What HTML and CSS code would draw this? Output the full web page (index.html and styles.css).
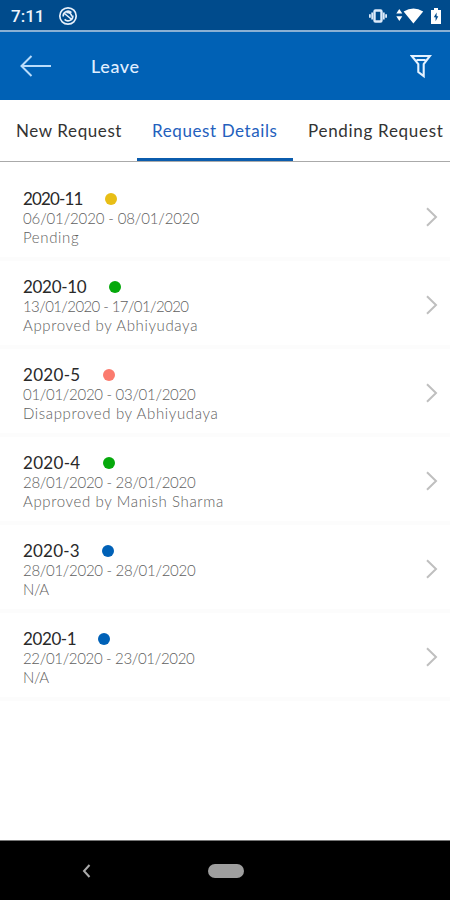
FILE: index.html
```html
<!DOCTYPE html>
<html lang="en">
<head>
<meta charset="utf-8">
<title>Leave</title>
<link rel="stylesheet" href="styles.css">
</head>
<body>
<div class="screen">
  <div class="status-bar">
    <span class="clock">7:11</span>
    <svg class="notice" width="20" height="20" viewBox="0 0 20 20" fill="none" stroke="#e6f0fb"><circle cx="10" cy="10" r="8.2" stroke-width="1.7"/><path d="M5.2 10.5a4.8 4.8 0 0 1 8.2-3.9M14.8 9.5a4.8 4.8 0 0 1-8.2 3.9M6.5 7.5l7.2 6M8.3 6.5c3.5-.3 5.2 1.7 5.5 4" stroke-width="1.6"/></svg>
    <svg class="vibrate" width="18" height="14" viewBox="0 0 18 14" fill="none" stroke="#dceafa"><rect x="5.5" y="1.5" width="7" height="11" rx="1" stroke-width="2.4"/><path d="M3.2 3.5v7M14.8 3.5v7M.9 5.2v3.6M17.1 5.2v3.6" stroke-width="1.8"/></svg>
    <svg class="wifi" width="28" height="18" viewBox="0 0 28 18" fill="#fff"><path d="M3.3 2l3 4.5h-6zM.3 9.2h6l-3 4.8zM7.6 4.5q10-6.2 19.6 0L17.4 16.5z"/></svg>
    <svg class="battery" width="12" height="18" viewBox="0 0 12 18"><path d="M4 1h4v2h3v14H1V3h3z" fill="#fff"/><path d="M6.6 5.5L3.8 10.3h1.8v4l2.7-5H6.6z" fill="#004b8c"/></svg>
  </div>
  <header class="app-bar">
    <svg class="back" width="32" height="22" viewBox="0 0 32 22" fill="none" stroke="#b9dcfb" stroke-width="2"><path d="M31 11H2M11.5 1L1.5 11l10 10"/></svg>
    <h1 class="title">Leave</h1>
    <svg class="filter" width="22" height="25" viewBox="0 0 22 25" fill="none" stroke="#e5f2ff" stroke-width="2.1"><path d="M1.8 2h18.1L13.7 10v12.2L8.3 18v-8zM6.5 6h9"/></svg>
  </header>
  <nav class="tabs">
    <span class="tab tab-new">New Request</span>
    <span class="tab tab-details">Request Details</span>
    <span class="tab tab-pending">Pending Request</span>
  </nav>
  <main class="list">
    <section class="row"><div class="info"><div class="head"><b class="id id-a">2020-11</b><i class="dot yellow"></i></div><div class="line dates-a">06/01/2020 - 08/01/2020</div><div class="line">Pending</div></div><svg class="chevron" width="12" height="20" viewBox="0 0 12 20"><path d="M1 1.2l9 8.8-9 8.8"/></svg></section>
    <section class="row"><div class="info"><div class="head"><b class="id id-b">2020-10</b><i class="dot green"></i></div><div class="line dates-b">13/01/2020 - 17/01/2020</div><div class="line">Approved by Abhiyudaya</div></div><svg class="chevron" width="12" height="20" viewBox="0 0 12 20"><path d="M1 1.2l9 8.8-9 8.8"/></svg></section>
    <section class="row"><div class="info"><div class="head"><b class="id id-c">2020-5</b><i class="dot red"></i></div><div class="line dates-c">01/01/2020 - 03/01/2020</div><div class="line">Disapproved by Abhiyudaya</div></div><svg class="chevron" width="12" height="20" viewBox="0 0 12 20"><path d="M1 1.2l9 8.8-9 8.8"/></svg></section>
    <section class="row"><div class="info"><div class="head"><b class="id id-c">2020-4</b><i class="dot green"></i></div><div class="line dates-c">28/01/2020 - 28/01/2020</div><div class="line">Approved by Manish Sharma</div></div><svg class="chevron" width="12" height="20" viewBox="0 0 12 20"><path d="M1 1.2l9 8.8-9 8.8"/></svg></section>
    <section class="row"><div class="info"><div class="head"><b class="id id-d">2020-3</b><i class="dot blue"></i></div><div class="line dates-c">28/01/2020 - 28/01/2020</div><div class="line short">N/A</div></div><svg class="chevron" width="12" height="20" viewBox="0 0 12 20"><path d="M1 1.2l9 8.8-9 8.8"/></svg></section>
    <section class="row"><div class="info"><div class="head"><b class="id id-e">2020-1</b><i class="dot blue"></i></div><div class="line dates-d">22/01/2020 - 23/01/2020</div><div class="line short">N/A</div></div><svg class="chevron" width="12" height="20" viewBox="0 0 12 20"><path d="M1 1.2l9 8.8-9 8.8"/></svg></section>
  </main>
  <footer class="nav-bar">
    <svg class="nav-back" width="9" height="14" viewBox="0 0 9 14"><path d="M7.5 1L2 7l5.5 6" fill="none" stroke="#aaa" stroke-width="2"/></svg>
    <span class="home"></span>
  </footer>
</div>
</body>
</html>
```
FILE: styles.css
```css
* { box-sizing: border-box; }
body { margin: 0; font-family: Lato, "Liberation Sans", sans-serif; background: #fff; }
svg { display: block; flex: none; }
.screen { width: 450px; height: 900px; display: flex; flex-direction: column; overflow: hidden; }
.status-bar { height: 32px; background: #004b8c; border-bottom: 2px solid #8ab0d4; display: flex; align-items: center; padding: 1px 8px 0 11px; flex: none; }
.clock { width: 47px; font: 500 17px/20px Roboto, sans-serif; color: #eef5fc; }
.vibrate { margin-left: auto; margin-right: 9px; }
.wifi { margin-right: 6px; }
.app-bar { height: 68px; background: #0061b5; display: flex; align-items: center; padding: 0 18px 0 20px; flex: none; }
.title { margin: 0 0 0 39px; font-size: 18px; font-weight: 500; line-height: 24px; color: #e0efff; letter-spacing: .6px; }
.filter { margin-left: auto; }
.tabs { height: 62px; display: flex; flex: none; border-bottom: 1px solid #aaa; font-size: 17px; line-height: 62px; white-space: nowrap; color: #333; }
.tab { height: 61px; }
.tab-new { width: 137px; padding-left: 16px; letter-spacing: .6px; }
.tab-details { width: 156px; padding-left: 15px; letter-spacing: .6px; color: #2460bd; border-bottom: 3px solid #0b5cad; }
.tab-pending { padding-left: 15px; letter-spacing: .7px; }
.list { flex: 1; padding-top: 11px; }
.row { height: 88px; padding: 16px 12px 0 23px; display: flex; justify-content: space-between; border-bottom: 4px solid #fcfcfc; }
.head { height: 20px; display: flex; align-items: center; }
.id { font-size: 17px; font-weight: 400; line-height: 20px; color: #292929; white-space: nowrap; }
.id-a { width: 82px; letter-spacing: -.85px; }
.id-b { width: 86px; letter-spacing: -.3px; }
.id-c { width: 79.5px; letter-spacing: .3px; }
.id-d { width: 79px; letter-spacing: .2px; }
.id-e { width: 75px; letter-spacing: -.4px; }
.dot { width: 12px; height: 12px; border-radius: 50%; }
.yellow { background: #e8be16; }
.green { background: #05a90b; }
.red { background: #fb7b6e; }
.blue { background: #0061b7; }
.line { font-size: 15px; font-weight: 300; line-height: 19px; letter-spacing: .63px; color: #606060; white-space: nowrap; }
.dates-a { letter-spacing: -.13px; }
.dates-b { letter-spacing: -.59px; }
.dates-c { letter-spacing: -.29px; }
.dates-d { letter-spacing: -.33px; }
.short { letter-spacing: -.4px; }
.chevron { margin-top: 18px; fill: none; stroke: #bfbfbf; stroke-width: 2; }
.nav-bar { height: 60px; background: #000; border-top: 1px solid #777; display: flex; align-items: center; padding-left: 82px; flex: none; }
.home { width: 36px; height: 14px; margin-left: 117px; border-radius: 7px; background: #9e9e9e; }
```
